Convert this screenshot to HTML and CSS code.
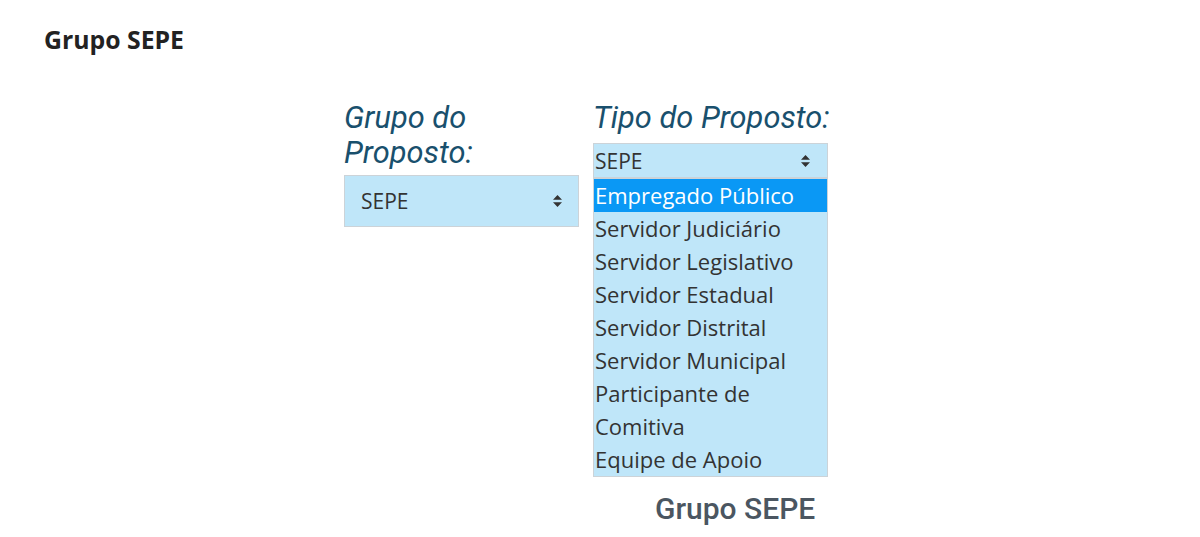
FILE: index.html
```html
<!DOCTYPE html>
<html lang="pt-BR">
<head>
  <meta charset="UTF-8">
  <title>Grupo SEPE</title>
  <link rel="stylesheet" href="styles.css">
</head>
<body>

  <h1 class="page-title">Grupo SEPE</h1>

  <!-- Campos do formulario -->
  <div class="form-row">
    <div class="field">
      <label class="field-label">Grupo do Proposto:</label>
      <div class="fake-select big">
        <span>SEPE</span>
        <svg class="arrows" width="9" height="12" viewBox="0 0 9 12"><path d="M4.5 0 L9 4.8 H0 Z M0 7.2 H9 L4.5 12 Z" fill="#333"/></svg>
      </div>
    </div>

    <div class="field">
      <label class="field-label one-line">Tipo do Proposto:</label>
      <div class="fake-select small">
        <span>SEPE</span>
        <svg class="arrows" width="9" height="12" viewBox="0 0 9 12"><path d="M4.5 0 L9 4.8 H0 Z M0 7.2 H9 L4.5 12 Z" fill="#333"/></svg>
      </div>
      <ul class="options">
        <li class="selected">Empregado Público</li>
        <li>Servidor Judiciário</li>
        <li>Servidor Legislativo</li>
        <li>Servidor Estadual</li>
        <li>Servidor Distrital</li>
        <li>Servidor Municipal</li>
        <li>Participante de Comitiva</li>
        <li>Equipe de Apoio</li>
      </ul>
      <p class="caption">Grupo SEPE</p>
    </div>
  </div>

</body>
</html>
```

FILE: styles.css
```css
/* Base */
body {
  margin: 0;
  background-color: #fff;
  font-family: 'Open Sans', sans-serif;
}

/* Titulo da pagina */
.page-title {
  margin: 0;
  padding: 22px 0 0 44px;
  font-size: 24.8px;
  font-weight: 700;
  color: #222;
  line-height: 34px;
}

/* Linha com as duas colunas */
.form-row {
  display: flex;
  gap: 14px;
  padding: 44px 0 0 344px;
}

.field {
  width: 235px;
  display: flex;
  flex-direction: column;
}

.field-label {
  font-family: 'Roboto', sans-serif;
  font-style: italic;
  font-size: 30.8px;
  line-height: 35px;
  color: #19506d;
  margin-bottom: 5px;
}

.field-label.one-line {
  white-space: nowrap;
}

/* Select desenhado */
.fake-select {
  display: flex;
  align-items: center;
  justify-content: space-between;
  background-color: #bfe6f9;
  border: 1px solid #ccd3d8;
  color: #333;
  box-sizing: border-box;
}

.fake-select.big {
  height: 52px;
  padding: 0 16px 0 16px;
  font-size: 21px;
}

.fake-select.small {
  height: 35px;
  margin-top: 3px;
  padding: 0 17px 0 1px;
  font-size: 21px;
}

.fake-select .arrows {
  display: block;
}

/* Lista aberta */
.options {
  list-style: none;
  margin: 0;
  padding: 0;
  background-color: #bfe6f9;
  border: 1px solid #ccd3d8;
}

.options li {
  font-size: 22px;
  line-height: 33px;
  color: #333;
  padding: 0 1px;
}

.options li.selected {
  background-color: #0a98f5;
  color: #fff;
}

.caption {
  margin: 14px 0 0 62px;
  font-family: 'Roboto', sans-serif;
  font-weight: 500;
  font-size: 30px;
  line-height: 36px;
  color: #4b5661;
  white-space: nowrap;
}
```
